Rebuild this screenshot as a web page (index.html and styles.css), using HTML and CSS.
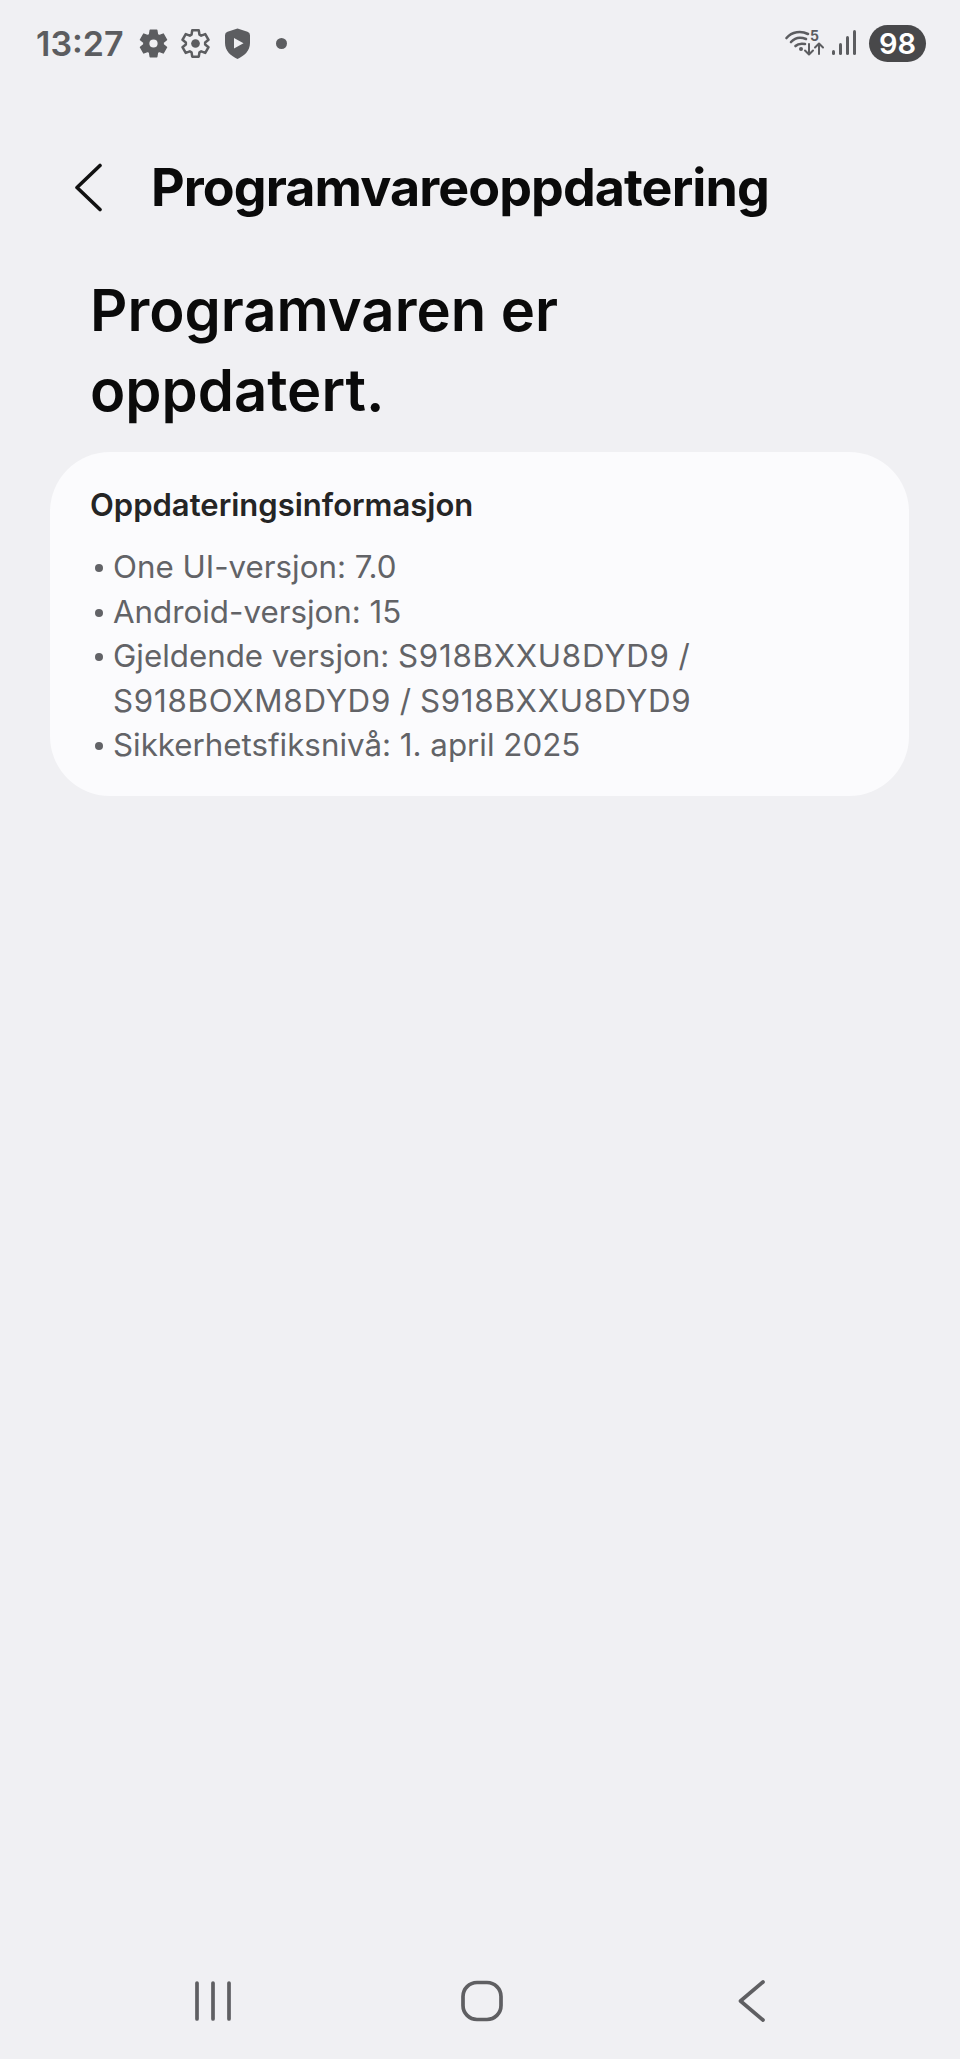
FILE: index.html
```html
<!DOCTYPE html>
<html lang="nb">
  <head>
    <meta charset="UTF-8" />
    <meta name="viewport" content="width=device-width, initial-scale=1.0" />
    <title>Programvareoppdatering</title>
    <link rel="stylesheet" href="styles.css">
  </head>
  <body>
    <div class="page">
      <div class="status">
        <span class="time">13:27</span>
        <svg class="ic-gear" viewBox="-16 -16 32 32">
          <path class="solid" fill-rule="evenodd" d="M-3.39-13.58L3.39-13.58L4.07-9.14L5.88-8.09L10.07-9.73L13.46-3.85L9.95-1.05L9.95 1.05L13.46 3.85L10.07 9.73L5.88 8.09L4.07 9.14L3.39 13.58L-3.39 13.58L-4.07 9.14L-5.88 8.09L-10.07 9.73L-13.46 3.85L-9.95 1.05L-9.95-1.05L-13.46-3.85L-10.07-9.73L-5.88-8.09L-4.07-9.14ZM-5 0a5 5 0 1 0 10 0a5 5 0 1 0-10 0Z"/>
        </svg>
        <svg class="ic-gear" viewBox="-16 -16 32 32">
          <path class="ring" d="M-3.39-13.58L3.39-13.58L4.07-9.14L5.88-8.09L10.07-9.73L13.46-3.85L9.95-1.05L9.95 1.05L13.46 3.85L10.07 9.73L5.88 8.09L4.07 9.14L3.39 13.58L-3.39 13.58L-4.07 9.14L-5.88 8.09L-10.07 9.73L-13.46 3.85L-9.95 1.05L-9.95-1.05L-13.46-3.85L-10.07-9.73L-5.88-8.09L-4.07-9.14Z"/>
          <circle class="dot" r="4.5"/>
        </svg>
        <svg class="ic-shield" viewBox="0 0 25 31">
          <path class="dot" fill-rule="evenodd" d="M12.5 0.5L22.5 3.8Q25 4.7 25 7.2V15C25 23 19 28 12.5 31C6 28 0 23 0 15V7.2Q0 4.7 2.5 3.8ZM9 10V20.5L18.5 15.2Z"/>
        </svg>
        <span class="notif-dot"></span>
        <span class="status-right">
          <svg class="ic-wifi" viewBox="0 0 38 28">
            <path class="line" d="M1.5 9C7 2.5 16 1.5 23 5M6 13C10 8.5 16 8 21 10M10.5 17C13 14.5 17 14.5 20 15"/>
            <circle class="dot" cx="16" cy="20" r="2"/>
            <path class="line thin" d="M24 15V25M20 21.5L24 25.5L28 21.5M34 25V15.5M30 18.5L34 14.5L38 18.5"/>
            <text class="five" x="25" y="12">5</text>
          </svg>
          <svg class="ic-signal" viewBox="0 0 26 26">
            <rect class="dot" x="0" y="20" width="3" height="5" rx="1.5"/>
            <rect class="dot" x="7" y="13" width="3" height="12" rx="1.5"/>
            <rect class="dot" x="14" y="6" width="3" height="19" rx="1.5"/>
            <rect class="dot" x="21" y="0" width="3" height="25" rx="1.5"/>
          </svg>
          <span class="battery">98</span>
        </span>
      </div>

      <div class="appbar">
        <svg class="ic-back" viewBox="0 0 28 49">
          <path d="M26 2.5L3 24.5L26 46.5"/>
        </svg>
        <div class="title">Programvareoppdatering</div>
      </div>

      <h1 class="heading">Programvaren er<br>oppdatert.</h1>

      <div class="card">
        <div class="card-title">Oppdateringsinformasjon</div>
        <ul class="info">
          <li>One UI-versjon: 7.0</li>
          <li>Android-versjon: 15</li>
          <li>Gjeldende versjon: <span class="code">S918BXXU8DYD9</span> / <span class="code">S918BOXM8DYD9</span> / <span class="code">S918BXXU8DYD9</span></li>
          <li>Sikkerhetsfiksnivå: 1. april 2025</li>
        </ul>
      </div>

      <div class="nav">
        <svg class="nav-recent" viewBox="0 0 40 42">
          <path d="M4 3V39M20 3V39M36 3V39"/>
        </svg>
        <svg class="nav-home" viewBox="0 0 44 44">
          <rect x="3" y="3.5" width="38" height="37" rx="14"/>
        </svg>
        <svg class="nav-back" viewBox="0 0 28 44">
          <path d="M25 3L2.5 22L25 41"/>
        </svg>
      </div>
    </div>
  </body>
</html>
```

FILE: styles.css
```css
body {
  margin: 0;
  background: #f0f0f3;
  font-family: Inter, "Noto Sans", sans-serif;
}

.page {
  display: flex;
  flex-direction: column;
  height: 2059px;
  overflow: hidden;
}

/* status bar */
.status {
  display: flex;
  align-items: center;
  height: 86px;
  padding: 0 34px 0 36px;
  color: #5c5d60;
}
.time {
  width: 87px;
  font-size: 34px;
  font-weight: 600;
}
.ic-gear {
  width: 31px;
  height: 31px;
  margin-left: 1px;
}
.ic-gear + .ic-gear {
  margin-left: 11px;
}
.ic-gear:first-of-type {
  margin-left: 15px;
}
.solid, .dot {
  fill: #5c5d60;
}
.solid {
  stroke: #5c5d60;
  stroke-width: 1.5;
  stroke-linejoin: round;
}
.ring {
  fill: none;
  stroke: #5c5d60;
  stroke-width: 2.6;
  stroke-linejoin: round;
}
.ic-shield {
  width: 25px;
  height: 31px;
  margin-left: 14px;
}
.notif-dot {
  width: 11px;
  height: 11px;
  margin-left: 26px;
  border-radius: 50%;
  background: #5c5d60;
}
.status-right {
  display: flex;
  align-items: center;
  margin-left: auto;
}
.ic-wifi {
  width: 38px;
  height: 28px;
  overflow: visible;
}
.line {
  fill: none;
  stroke: #5c5d60;
  stroke-width: 2.6;
  stroke-linecap: round;
  stroke-linejoin: round;
}
.line.thin {
  stroke-width: 2;
}
.five {
  font-size: 14px;
  font-weight: 700;
  fill: #5c5d60;
}
.ic-signal {
  width: 26px;
  height: 26px;
  margin-left: 9px;
}
.battery {
  width: 57px;
  height: 37px;
  margin-left: 11px;
  border-radius: 19px;
  background: #48484a;
  color: #fff;
  font-size: 29px;
  font-weight: 600;
  line-height: 37px;
  text-align: center;
}

/* header */
.appbar {
  display: flex;
  align-items: center;
  height: 52px;
  margin-top: 75px;
  padding-left: 74px;
}
.ic-back {
  width: 28px;
  height: 49px;
  fill: none;
  stroke: #111;
  stroke-width: 3.6;
  stroke-linecap: round;
  stroke-linejoin: round;
}
.title {
  margin-left: 49px;
  font-size: 52px;
  font-weight: 650;
  color: #0a0a0a;
  letter-spacing: -0.92px;
}
.heading {
  margin: 57px 0 0 90px;
  font-size: 58px;
  font-weight: 620;
  line-height: 80px;
  color: #0a0a0a;
}

/* info card */
.card {
  margin: 22px 51px 0 50px;
  padding: 33px 40px 28px;
  border-radius: 60px;
  background: #fbfbfd;
}
.card-title {
  font-size: 31px;
  font-weight: 600;
  line-height: 40px;
  color: #252525;
}
.info {
  margin: 20px 0 0;
  padding: 0;
  list-style: none;
  font-size: 31.3px;
  line-height: 44.6px;
  color: #626367;
}
.code {
  letter-spacing: 0.72px;
}
.info li {
  position: relative;
  padding-left: 23px;
}
.info li::before {
  content: "";
  position: absolute;
  left: 5px;
  top: 19px;
  width: 8px;
  height: 8px;
  border-radius: 50%;
  background: #626367;
}

/* bottom navigation */
.nav {
  display: flex;
  align-items: center;
  margin-top: auto;
  height: 44px;
  margin-bottom: 36px;
  padding-left: 193px;
}
.nav svg {
  fill: none;
  stroke: #5f5f62;
  stroke-width: 3.7;
  stroke-linecap: round;
  stroke-linejoin: round;
}
.nav-recent {
  width: 40px;
  height: 42px;
}
.nav-home {
  width: 44px;
  height: 44px;
  margin-left: 227px;
}
.nav-back {
  width: 28px;
  height: 44px;
  margin-left: 234px;
}
```
